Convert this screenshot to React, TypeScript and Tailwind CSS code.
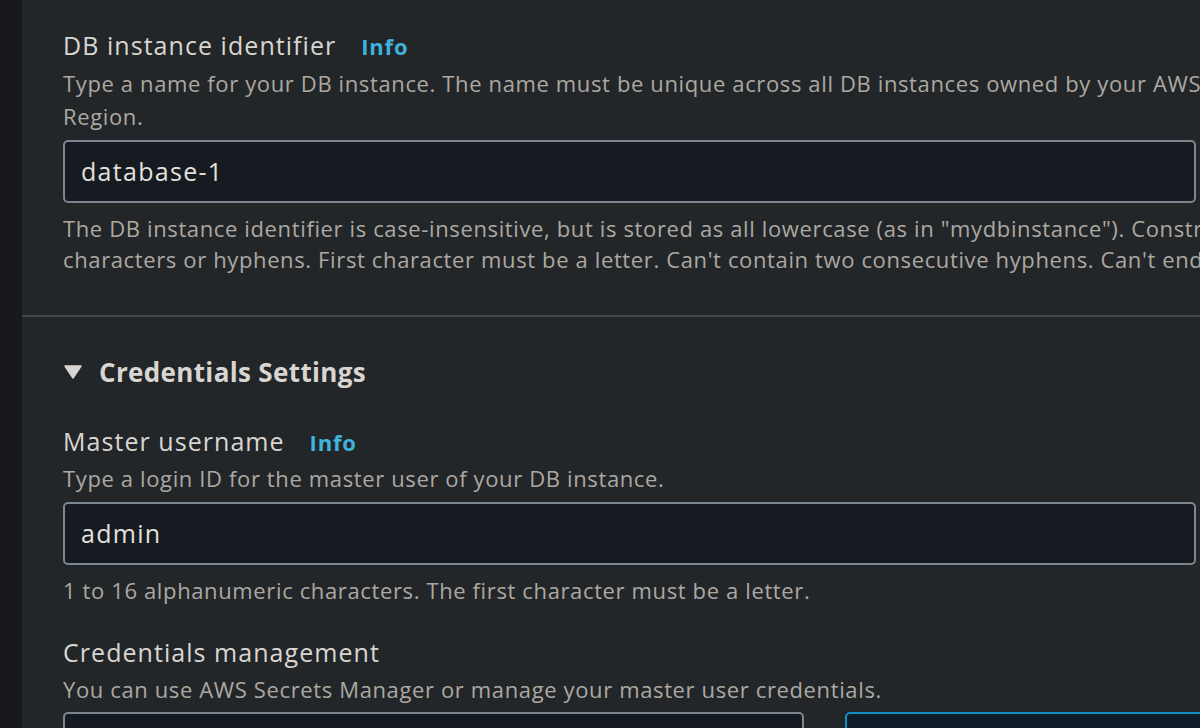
import React from "react";

// 필드 라벨 + Info 링크
const FieldLabel: React.FC<{ text: string; info?: boolean }> = ({ text, info }) => (
  <div className="flex items-baseline gap-[25px] leading-[32px] text-[25px] font-medium tracking-[1.05px] text-[#d9d6d1]">
    <span>{text}</span>
    {info && <span className="text-[22px] font-bold tracking-[0.8px] text-[#3fb3dc]">Info</span>}
  </div>
);

const Desc: React.FC<{ children: React.ReactNode; className?: string }> = ({ children, className = "" }) => (
  <p className={`text-[22px] font-medium tracking-[0.63px] text-[#aca8a2] ${className}`}>{children}</p>
);

const TextInput: React.FC<{ value: string; className?: string }> = ({ value, className = "" }) => (
  <div
    className={`h-[63px] flex items-center px-[16px] rounded-[5px] border-2 border-[#7c868f] bg-[#161a21] text-[25px] font-medium tracking-[1.3px] text-[#e4e1dc] ${className}`}>
    {value}
  </div>
);

export default function App() {
  return (
    <div
      className="w-[1200px] h-[728px] flex overflow-hidden bg-[#232629]"
      style={{ fontFamily: '"Open Sans", "Noto Sans", sans-serif' }}>
      {/* 왼쪽 사이드 바 */}
      <div className="w-[22px] shrink-0 bg-[#16181d]" />

      <div className="flex-1 min-w-0 overflow-hidden">
        {/* DB instance identifier */}
        <div className="pl-[41px] pt-[29px] w-[1800px]">
          <FieldLabel text="DB instance identifier" info />
          <Desc className="mt-[5px] leading-[33px] whitespace-nowrap">
            Type a name for your DB instance. The name must be unique across all DB instances owned by your AWS
            account in the current AWS
            <br />
            Region.
          </Desc>
          <TextInput value="database-1" className="mt-[7px] w-[1133px]" />
          <Desc className="mt-[10px] leading-[31px] whitespace-nowrap">
            The DB instance identifier is case-insensitive, but is stored as all lowercase (as in "mydbinstance").
            Constraints: 1 to 60 alphanumeric
            <br />
            characters or hyphens. First character must be a letter. Can't contain two consecutive hyphens. Can't end
            with a hyphen.
          </Desc>
        </div>

        <div className="mt-[40px] h-[2px] bg-[#41464e]" />

        {/* Credentials Settings */}
        <div className="pl-[41px] w-[1800px]">
          <div className="mt-[37px] flex items-center gap-[17px] leading-[36px]">
            <svg width="18" height="14" viewBox="0 0 18 14" className="ml-[1px]">
              <path d="M1 1 H17 L9 13 Z" fill="#d9d6d1" stroke="#d9d6d1" strokeWidth="1.5" strokeLinejoin="round" />
            </svg>
            <span className="text-[26px] font-bold tracking-[0.35px] text-[#d9d6d1]">Credentials Settings</span>
          </div>

          <div className="mt-[35px]">
            <FieldLabel text="Master username" info />
          </div>
          <Desc className="mt-[4px] leading-[33px]">Type a login ID for the master user of your DB instance.</Desc>
          <TextInput value="admin" className="mt-[7px] w-[1133px]" />
          <Desc className="mt-[10px] leading-[31px]">
            1 to 16 alphanumeric characters. The first character must be a letter.
          </Desc>

          <div className="mt-[30px]">
            <FieldLabel text="Credentials management" />
          </div>
          <Desc className="mt-[5px] leading-[33px]">
            You can use AWS Secrets Manager or manage your master user credentials.
          </Desc>
          <div className="mt-[6px] flex gap-[41px]">
            <div className="w-[741px] h-[70px] rounded-[5px] border-2 border-[#7c868f] bg-[#161a21]" />
            <div className="w-[500px] h-[70px] rounded-[5px] border-2 border-[#0f8fc0] bg-[#0f1b29]" />
          </div>
        </div>
      </div>
    </div>
  );
}
